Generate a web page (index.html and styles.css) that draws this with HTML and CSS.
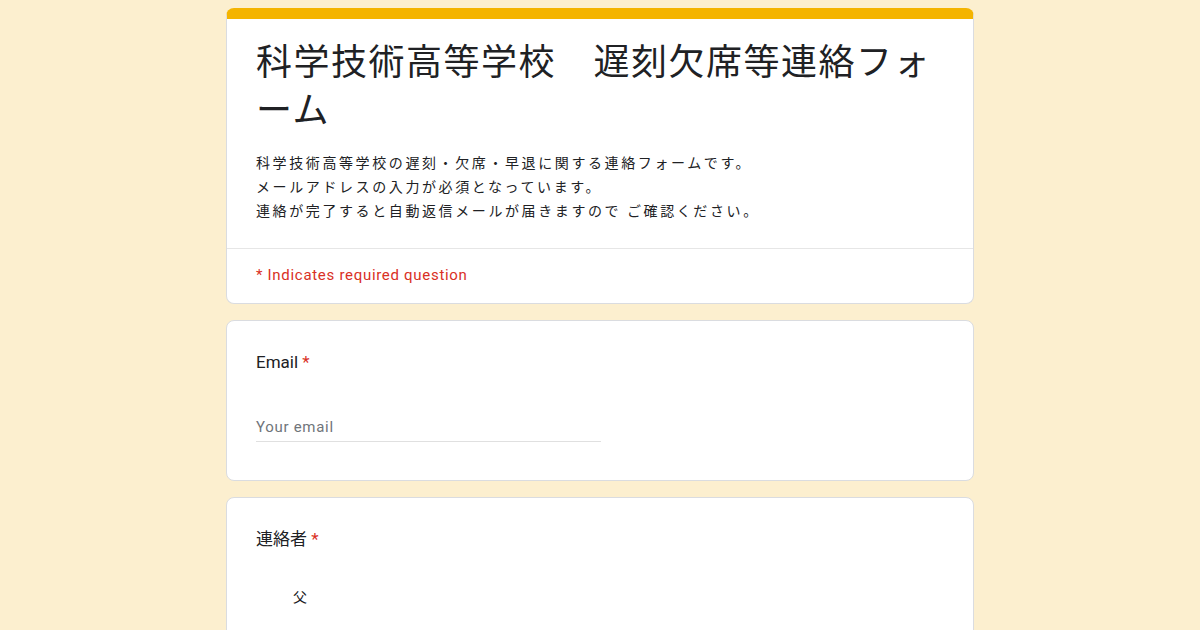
FILE: index.html
```html
<!DOCTYPE html>
<html lang="ja">
<head>
<meta charset="utf-8">
<title>科学技術高等学校　遅刻欠席等連絡フォーム</title>
<link rel="stylesheet" href="styles.css">
</head>
<body>
<main class="form">
  <section class="card header-card">
    <div class="header-main">
      <h1 class="title">科学技術高等学校　遅刻欠席等連絡フォーム</h1>
      <div class="desc">科学技術高等学校の遅刻・欠席・早退に関する連絡フォームです。<br>メールアドレスの入力が必須となっています。<br>連絡が完了すると自動返信メールが届きますので ご確認ください。</div>
    </div>
    <div class="required-note">* Indicates required question</div>
  </section>

  <section class="card question">
    <div class="q-label">Email <span class="star">*</span></div>
    <div class="input-wrap"><span class="placeholder">Your email</span></div>
  </section>

  <section class="card question">
    <div class="q-label">連絡者 <span class="star">*</span></div>
    <div class="option">父</div>
  </section>
</main>
</body>
</html>
```

FILE: styles.css
```css
html, body {
  margin: 0;
  padding: 0;
}
body {
  background: #fcefcf;
  font-family: Roboto, "Noto Sans CJK JP", sans-serif;
  color: #202124;
}
.form {
  width: 748px;
  margin: 8px auto 0;
  display: flex;
  flex-direction: column;
  gap: 16px;
}
.card {
  background: #fff;
  border: 1px solid #dadce0;
  border-radius: 8px;
  box-sizing: border-box;
}
.header-card {
  border-top: 11px solid #f4b400;
  overflow: hidden;
}
.header-main {
  padding: 16px 29px 26px;
  border-bottom: 1px solid #e6e6e6;
}
.title {
  margin: 0;
  font-family: "Noto Sans CJK JP", sans-serif;
  font-weight: 400;
  font-size: 36px;
  line-height: 48px;
  letter-spacing: 1.5px;
  color: #202124;
}
.desc {
  margin-top: 19px;
  font-family: "Noto Sans CJK JP", sans-serif;
  font-size: 14px;
  line-height: 24px;
  letter-spacing: 2.6px;
  color: #202124;
}
.required-note {
  padding: 16px 29px 18px;
  font-size: 15px;
  line-height: 20px;
  color: #d93025;
  letter-spacing: 0.7px;
}
.question {
  padding: 29px 29px 24px;
}
.q-label {
  font-size: 17px;
  line-height: 24px;
  font-family: Roboto, "Noto Sans CJK JP", sans-serif;
}
.star {
  color: #d93025;
}
.input-wrap {
  width: 345px;
  margin-top: 43px;
  border-bottom: 1px solid #e0e0e0;
  padding-bottom: 4px;
  margin-bottom: 14px;
}
.placeholder {
  font-size: 15px;
  line-height: 20px;
  color: #70757a;
  letter-spacing: 0.7px;
}
.option {
  margin-top: 35px;
  padding-left: 37px;
  font-family: "Noto Sans CJK JP", sans-serif;
  font-size: 14px;
  line-height: 20px;
  padding-bottom: 40px;
}
```
